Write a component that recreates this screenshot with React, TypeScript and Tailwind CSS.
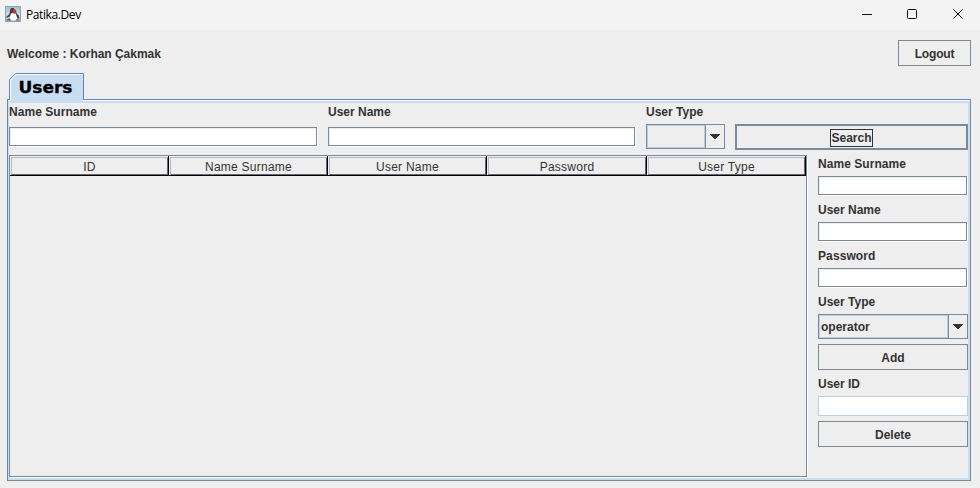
import React from "react";

function Label({ children, className = "" }: { children: React.ReactNode; className?: string }) {
  return <div className={`h-4 whitespace-nowrap text-[12px] leading-4 font-bold ${className}`}>{children}</div>;
}

function Field({ className = "" }: { className?: string }) {
  return (
    <div className={`h-5 border-r border-b border-white ${className}`}>
      <input className="block h-[19px] w-full border border-[#7a8a99] bg-white px-1 text-[12px] shadow-[inset_1px_1px_0_#eeeeee] outline-none" />
    </div>
  );
}

function Button({ children, className = "" }: { children: React.ReactNode; className?: string }) {
  return (
    <button className={`flex h-[26px] items-center justify-center border border-[#7a8a99] pt-px text-[12px] leading-4 font-bold ${className}`}>
      {children}
    </button>
  );
}

function Combo({ value, className = "" }: { value: string; className?: string }) {
  return (
    <div className={`flex h-[25px] border border-[#7a8a99] ${className}`}>
      <div className="flex-1 border border-[#b8cfe5] pl-px text-[12px] leading-[23px] font-bold">{value}</div>
      <div className="flex w-[19px] items-center justify-center border-l border-[#7a8a99]">
        <svg width="10" height="5" viewBox="0 0 10 5" shapeRendering="crispEdges" fill="#333333">
          <path d="M0 0h10v1H9v1H8v1H7v1H6v1H4V4H3V3H2V2H1V1H0z" />
        </svg>
      </div>
    </div>
  );
}

function HeaderCell({ title, className = "" }: { title: string; className?: string }) {
  return (
    <div className={`h-5 border-r border-b border-black pt-px pl-px ${className}`}>
      <div className="h-[18px] border border-t-[#b8b8cc] border-r-[#666677] border-b-[#666677] border-l-[#b8b8cc] text-center text-[12px] leading-[19px] tracking-[0.25px]">
        {title}
      </div>
    </div>
  );
}

function JavaIcon() {
  return (
    <svg width="16" height="16" viewBox="0 0 16 16">
      <defs>
        <linearGradient id="tile" x1="0" y1="0" x2="0" y2="1">
          <stop stopColor="#a3bccd" />
          <stop offset="0.7" stopColor="#dce5eb" />
          <stop offset="1" stopColor="#8e9ba5" />
        </linearGradient>
      </defs>
      <path fill="url(#tile)" stroke="#86a3b8" d="M.5.5h15v15H.5z" />
      <path fill="#ffffff" d="M5.5 8 7.5 6h3l1.2 4 .8 3.5-2 1H6l-2-1z" />
      <path fill="#3d4044" d="M6 2h2.5l2.5 3 .8 3 1.7 1 1 3-1.5 1-1.5-3-.8-2.5-2-.7L6 7.5l-1 3-3.5 1.5v-1.5L4.5 8 5 4z" />
      <path fill="#666b70" d="M2 13.5 4.5 12l2 2.5H2zM10 14.5l2.5-2 1.5 2z" />
      <circle cx="9.2" cy="5.8" r="2" fill="#cf2c2b" />
    </svg>
  );
}

export default function App() {
  return (
    <div className="flex h-[488px] w-[980px] flex-col overflow-hidden bg-[#eeeeee] font-['Liberation_Sans',Arial,sans-serif] text-[#333333]">
      <header className="flex h-[30px] shrink-0 bg-[#f3f3f3] pl-[5px]">
        <div className="pt-1.5"><JavaIcon /></div>
        <div className="ml-[5px] flex-1 pt-[7px] font-['Open_Sans','Noto_Sans',sans-serif] text-[12px] leading-4 tracking-[-0.4px] text-black">Patika.Dev</div>
        <svg width="120" height="30" viewBox="860 0 120 30" fill="none" stroke="#111111">
          <path d="M862 14.5h10" />
          <rect x="907.5" y="9.5" width="9" height="9" rx="1" />
          <path d="m953.3 9.3 9.4 9.4m0-9.4-9.4 9.4" />
        </svg>
      </header>

      <div className="flex h-[43px] shrink-0 justify-between pt-2.5 pr-[9px] pl-[7px]">
        <Label className="mt-[6px] tracking-[-0.03px]">Welcome : Korhan Çakmak</Label>
        <Button className="w-[73px] tracking-[-0.15px]">Logout</Button>
      </div>

      <div className="z-10 ml-[9px] h-[28px] w-[75px] shrink-0">
        <svg width="75" height="28" viewBox="0 0 75 28" className="block">
          <path d="M.5 26V6.5l6-6h68V26" fill="#c8ddf2" stroke="#6382bf" />
          <path d="M1.5 27V7l5.3-5.5H74" fill="none" stroke="#ffffff" />
          <path d="M2 26h72v2H2z" fill="#c8ddf2" />
          <text x="9.5" y="20" fontFamily="DejaVu Sans" fontWeight="700" fontSize="16" textLength="54" lengthAdjust="spacingAndGlyphs" fill="#000000" stroke="#000000" strokeWidth="0.3">Users</text>
        </svg>
      </div>

      <main className="-mt-[2px] ml-[7px] flex h-[382px] w-[964px] shrink-0 flex-col border border-t-[#6382bf] border-r-[#7a8a99] border-b-[#7a8a99] border-l-[#6382bf]">
        <div className="h-[3px] shrink-0 border-t border-white bg-[#c8ddf2]" />
        <div className="flex h-[377px] flex-1 border-r-2 border-b-2 border-l border-[#c8ddf2]">
          <div className="flex flex-1 flex-col">
            <div className="flex h-[52px] shrink-0">
              <div className="w-[319px] pt-px">
                <Label className="tracking-[0.05px]">Name Surname</Label>
                <Field className="mt-[7px] w-[309px]" />
              </div>
              <div className="w-[318px] pt-px">
                <Label>User Name</Label>
                <Field className="mt-[7px] w-[308px]" />
              </div>
              <div className="w-[89px] pt-px">
                <Label>User Type</Label>
                <Combo value="" className="mt-1 w-[79px]" />
              </div>
              <Button className="mt-[21px] w-[233px] border-2 pt-0">
                <span className="h-[18px] w-[43px] border border-[#333333] text-center leading-[17px]">Search</span>
              </Button>
            </div>

            <div className="flex flex-1">
              <section className="h-[323px] w-[799px] border-r border-b border-white">
                <div className="h-[322px] border border-[#7a8a99]">
                  <div className="flex bg-[#eeeeee]">
                    <HeaderCell title="ID" className="w-[159px]" />
                    <HeaderCell title="Name Surname" className="w-[159px]" />
                    <HeaderCell title="User Name" className="w-[159px]" />
                    <HeaderCell title="Password" className="w-[160px]" />
                    <HeaderCell title="User Type" className="w-[159px]" />
                  </div>
                </div>
              </section>
              <aside className="ml-[10px] flex w-[150px] flex-col">
                <Label className="mt-px tracking-[0.05px]">Name Surname</Label>
                <Field className="mt-1" />
                <Label className="mt-[6px]">User Name</Label>
                <Field className="mt-1" />
                <Label className="mt-[6px] tracking-[0.1px]">Password</Label>
                <Field className="mt-1" />
                <Label className="mt-[6px]">User Type</Label>
                <Combo value="operator" className="mt-1" />
                <Button className="mt-[5px]">Add</Button>
                <Label className="mt-[6px]">User ID</Label>
                <input className="mt-1 block h-5 border border-[#b8cfe5] bg-white px-1 text-[12px] outline-none" />
                <Button className="mt-[5px]">Delete</Button>
              </aside>
            </div>
          </div>
        </div>
      </main>
    </div>
  );
}
